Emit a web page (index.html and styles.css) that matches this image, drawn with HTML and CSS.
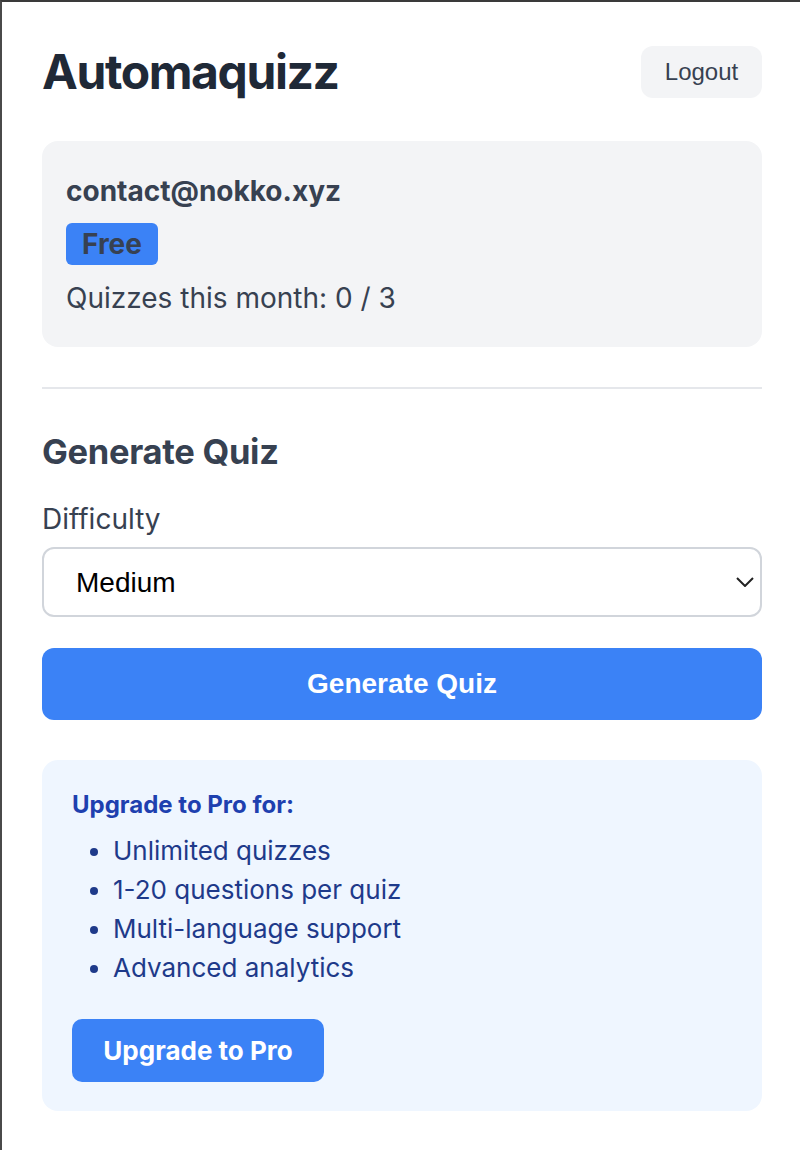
FILE: index.html
```html
<!DOCTYPE html>
<html>
<head>
<meta charset="utf-8">
<link rel="stylesheet" href="styles.css">
</head>
<body>
<div class="page">
  <header class="header">
    <h1 class="title">Automaquizz</h1>
    <button class="logout">Logout</button>
  </header>

  <section class="account">
    <div class="email">contact@nokko.xyz</div>
    <div class="badge-row"><span class="badge">Free</span></div>
    <div class="usage">Quizzes this month: 0 / 3</div>
  </section>

  <hr class="divider">

  <section class="generate">
    <h2 class="section-title">Generate Quiz</h2>
    <label class="label" for="difficulty">Difficulty</label>
    <div class="select-wrap">
      <select id="difficulty" class="select">
        <option>Easy</option>
        <option selected>Medium</option>
        <option>Hard</option>
      </select>
      <svg class="chevron" width="18" height="10" viewBox="0 0 18 10"><path d="M1 1 L9 9 L17 1" fill="none" stroke="#222" stroke-width="2"/></svg>
    </div>
    <button class="primary">Generate Quiz</button>
  </section>

  <section class="pro">
    <div class="pro-title">Upgrade to Pro for:</div>
    <ul class="pro-list">
      <li>Unlimited quizzes</li>
      <li>1-20 questions per quiz</li>
      <li>Multi-language support</li>
      <li>Advanced analytics</li>
    </ul>
    <button class="pro-btn">Upgrade to Pro</button>
  </section>
</div>
</body>
</html>
```

FILE: styles.css
```css
html, body {
  margin: 0;
  padding: 0;
  background: #ffffff;
}
body {
  height: 1150px;
  box-sizing: border-box;
  border-top: 2px solid #3a3a3a;
  border-left: 2px solid #4a4a4a;
  font-family: Inter, "Liberation Sans", sans-serif;
  color: #374151;
}
.page {
  padding: 0 38px 0 40px;
}
.header {
  display: flex;
  justify-content: space-between;
  align-items: center;
  padding-top: 42px;
}
.title {
  margin: 0;
  font-size: 48px;
  font-weight: 700;
  color: #1f2937;
  letter-spacing: -1.4px;
  line-height: 56px;
}
.logout {
  width: 121px;
  height: 52px;
  border: none;
  border-radius: 12px;
  background: #f3f4f6;
  color: #374151;
  font-family: "Liberation Sans", Arial, sans-serif;
  font-size: 24px;
}
.account {
  margin-top: 41px;
  background: #f3f4f6;
  border-radius: 16px;
  padding: 34px 24px 32px;
}
.email {
  font-size: 28px;
  font-weight: 700;
  line-height: 32px;
}
.badge-row {
  margin-top: 16px;
  display: flex;
}
.badge {
  display: block;
  background: #3b82f6;
  border-radius: 6px;
  padding: 0 16px;
  height: 42px;
  line-height: 42px;
  font-size: 28px;
  font-weight: 700;
  color: #374151;
}
.usage {
  margin-top: 16px;
  font-size: 28px;
  line-height: 34px;
}
.divider {
  margin: 40px 0 0;
  border: none;
  border-top: 2px solid #e5e7eb;
}
.section-title {
  margin: 43px 0 0;
  font-size: 34.5px;
  font-weight: 700;
  line-height: 40px;
  color: #374151;
  letter-spacing: -0.3px;
}
.label {
  display: block;
  margin-top: 29px;
  font-size: 28px;
  line-height: 36px;
}
.select-wrap {
  position: relative;
  margin-top: 10px;
}
.select {
  display: block;
  width: 100%;
  height: 70px;
  box-sizing: border-box;
  border: 2px solid #d1d5db;
  border-radius: 12px;
  background: #ffffff;
  padding: 0 32px;
  font-family: "Liberation Sans", Arial, sans-serif;
  font-size: 28px;
  color: #000;
  appearance: none;
  -webkit-appearance: none;
}
.chevron {
  position: absolute;
  right: 8px;
  top: 30px;
  pointer-events: none;
}
.primary {
  display: block;
  width: 100%;
  height: 72px;
  margin-top: 31px;
  border: none;
  border-radius: 12px;
  background: #3b82f6;
  color: #ffffff;
  font-family: "Liberation Sans", Arial, sans-serif;
  font-weight: 700;
  font-size: 28px;
}
.pro {
  margin-top: 40px;
  background: #eff6ff;
  border-radius: 16px;
  padding: 30px 30px 29px;
}
.pro-title {
  font-size: 24px;
  font-weight: 700;
  color: #1e40af;
  line-height: 30px;
}
.pro-list {
  margin: 11px 0 0;
  padding-left: 41px;
  color: #1e3a8a;
  font-size: 26px;
  line-height: 39px;
}
.pro-btn {
  margin-top: 32px;
  width: 252px;
  height: 63px;
  border: none;
  border-radius: 10px;
  background: #3b82f6;
  color: #ffffff;
  font-family: Inter, "Liberation Sans", sans-serif;
  font-weight: 700;
  font-size: 26px;
}
```
